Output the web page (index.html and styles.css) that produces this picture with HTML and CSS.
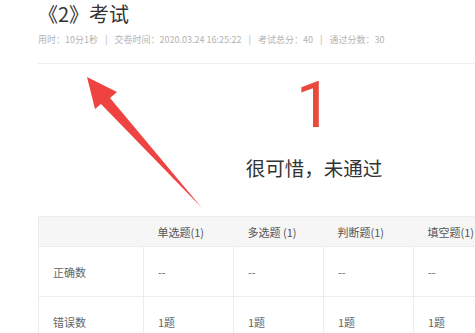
FILE: index.html
```html
<!DOCTYPE html>
<html lang="zh-CN">

<head>
    <meta charset="UTF-8">
    <meta name="viewport" content="width=device-width, initial-scale=1.0">
    <title>考试结果</title>
    <link rel="stylesheet" href="styles.css">
</head>

<body>

    <div class="page">

        <h1 class="examtitle">《2》考试</h1>

        <div class="examinfo">
            <span>用时：10分1秒</span>
            <span class="sep">|</span>
            <span>交卷时间：2020.03.24 16:25:22</span>
            <span class="sep">|</span>
            <span>考试总分：40</span>
            <span class="sep">|</span>
            <span>通过分数：30</span>
        </div>

        <div class="result">
            <div class="score">1</div>
            <div class="message">很可惜，未通过</div>
        </div>

        <table class="stats">
            <tr>
                <th class="firstcol"></th>
                <th>单选题(1)</th>
                <th>多选题 (1)</th>
                <th>判断题(1)</th>
                <th>填空题(1)</th>
            </tr>
            <tr>
                <td class="firstcol">正确数</td>
                <td>--</td>
                <td>--</td>
                <td>--</td>
                <td>--</td>
            </tr>
            <tr>
                <td class="firstcol">错误数</td>
                <td>1题</td>
                <td>1题</td>
                <td>1题</td>
                <td>1题</td>
            </tr>
        </table>
    </div>

    <!-- annotation arrow drawn over the page -->
    <svg class="arrow" width="475" height="333" viewBox="0 0 475 333">
        <polygon points="87,77 117,92 110,98 202,208 101,104 95,109" fill="#ee4341" />
    </svg>

</body>

</html>
```

FILE: styles.css
```css
body {
    margin: 0;
    padding: 0;
    background: #fff;
    overflow: hidden;
    font-family: "Noto Sans CJK SC", sans-serif;
}

* {
    box-sizing: border-box;
}

.page {
    padding-left: 38px;
    width: 600px;
}

.examtitle {
    margin: 0;
    padding-top: 2px;
    font-size: 20px;
    font-weight: normal;
    line-height: 24px;
    color: #333;
}

.examinfo {
    margin-top: 7px;
    font-size: 9px;
    line-height: 14px;
    color: #b3b3b3;
    padding-bottom: 16px;
    border-bottom: 1px solid #eeeeee;
    white-space: nowrap;
}

.sep {
    margin: 0 5px;
}

.result {
    width: 552px;
    text-align: center;
}

.score {
    margin-top: 10px;
    font-family: Roboto, "Liberation Sans", sans-serif;
    font-weight: normal;
    font-size: 64px;
    line-height: 64px;
    color: #ea4a3e;
}

.message {
    margin-top: 16px;
    font-size: 19.5px;
    line-height: 28px;
    color: #333;
}

.stats {
    margin-top: 34px;
    border-collapse: collapse;
    table-layout: fixed;
    width: 465px;
    font-size: 11px;
    color: #666;
    border: 1px solid #ececec;
}

.stats th {
    height: 30px;
    width: 90px;
    padding: 0 0 0 14px;
    text-align: left;
    font-weight: normal;
    color: #555;
    background: #f6f6f6;
}

.stats td {
    height: 50px;
    padding: 0 0 0 14px;
    border: 1px solid #ececec;
}

.stats .firstcol {
    width: 105px;
}

.arrow {
    position: absolute;
    top: 0;
    left: 0;
}
```
